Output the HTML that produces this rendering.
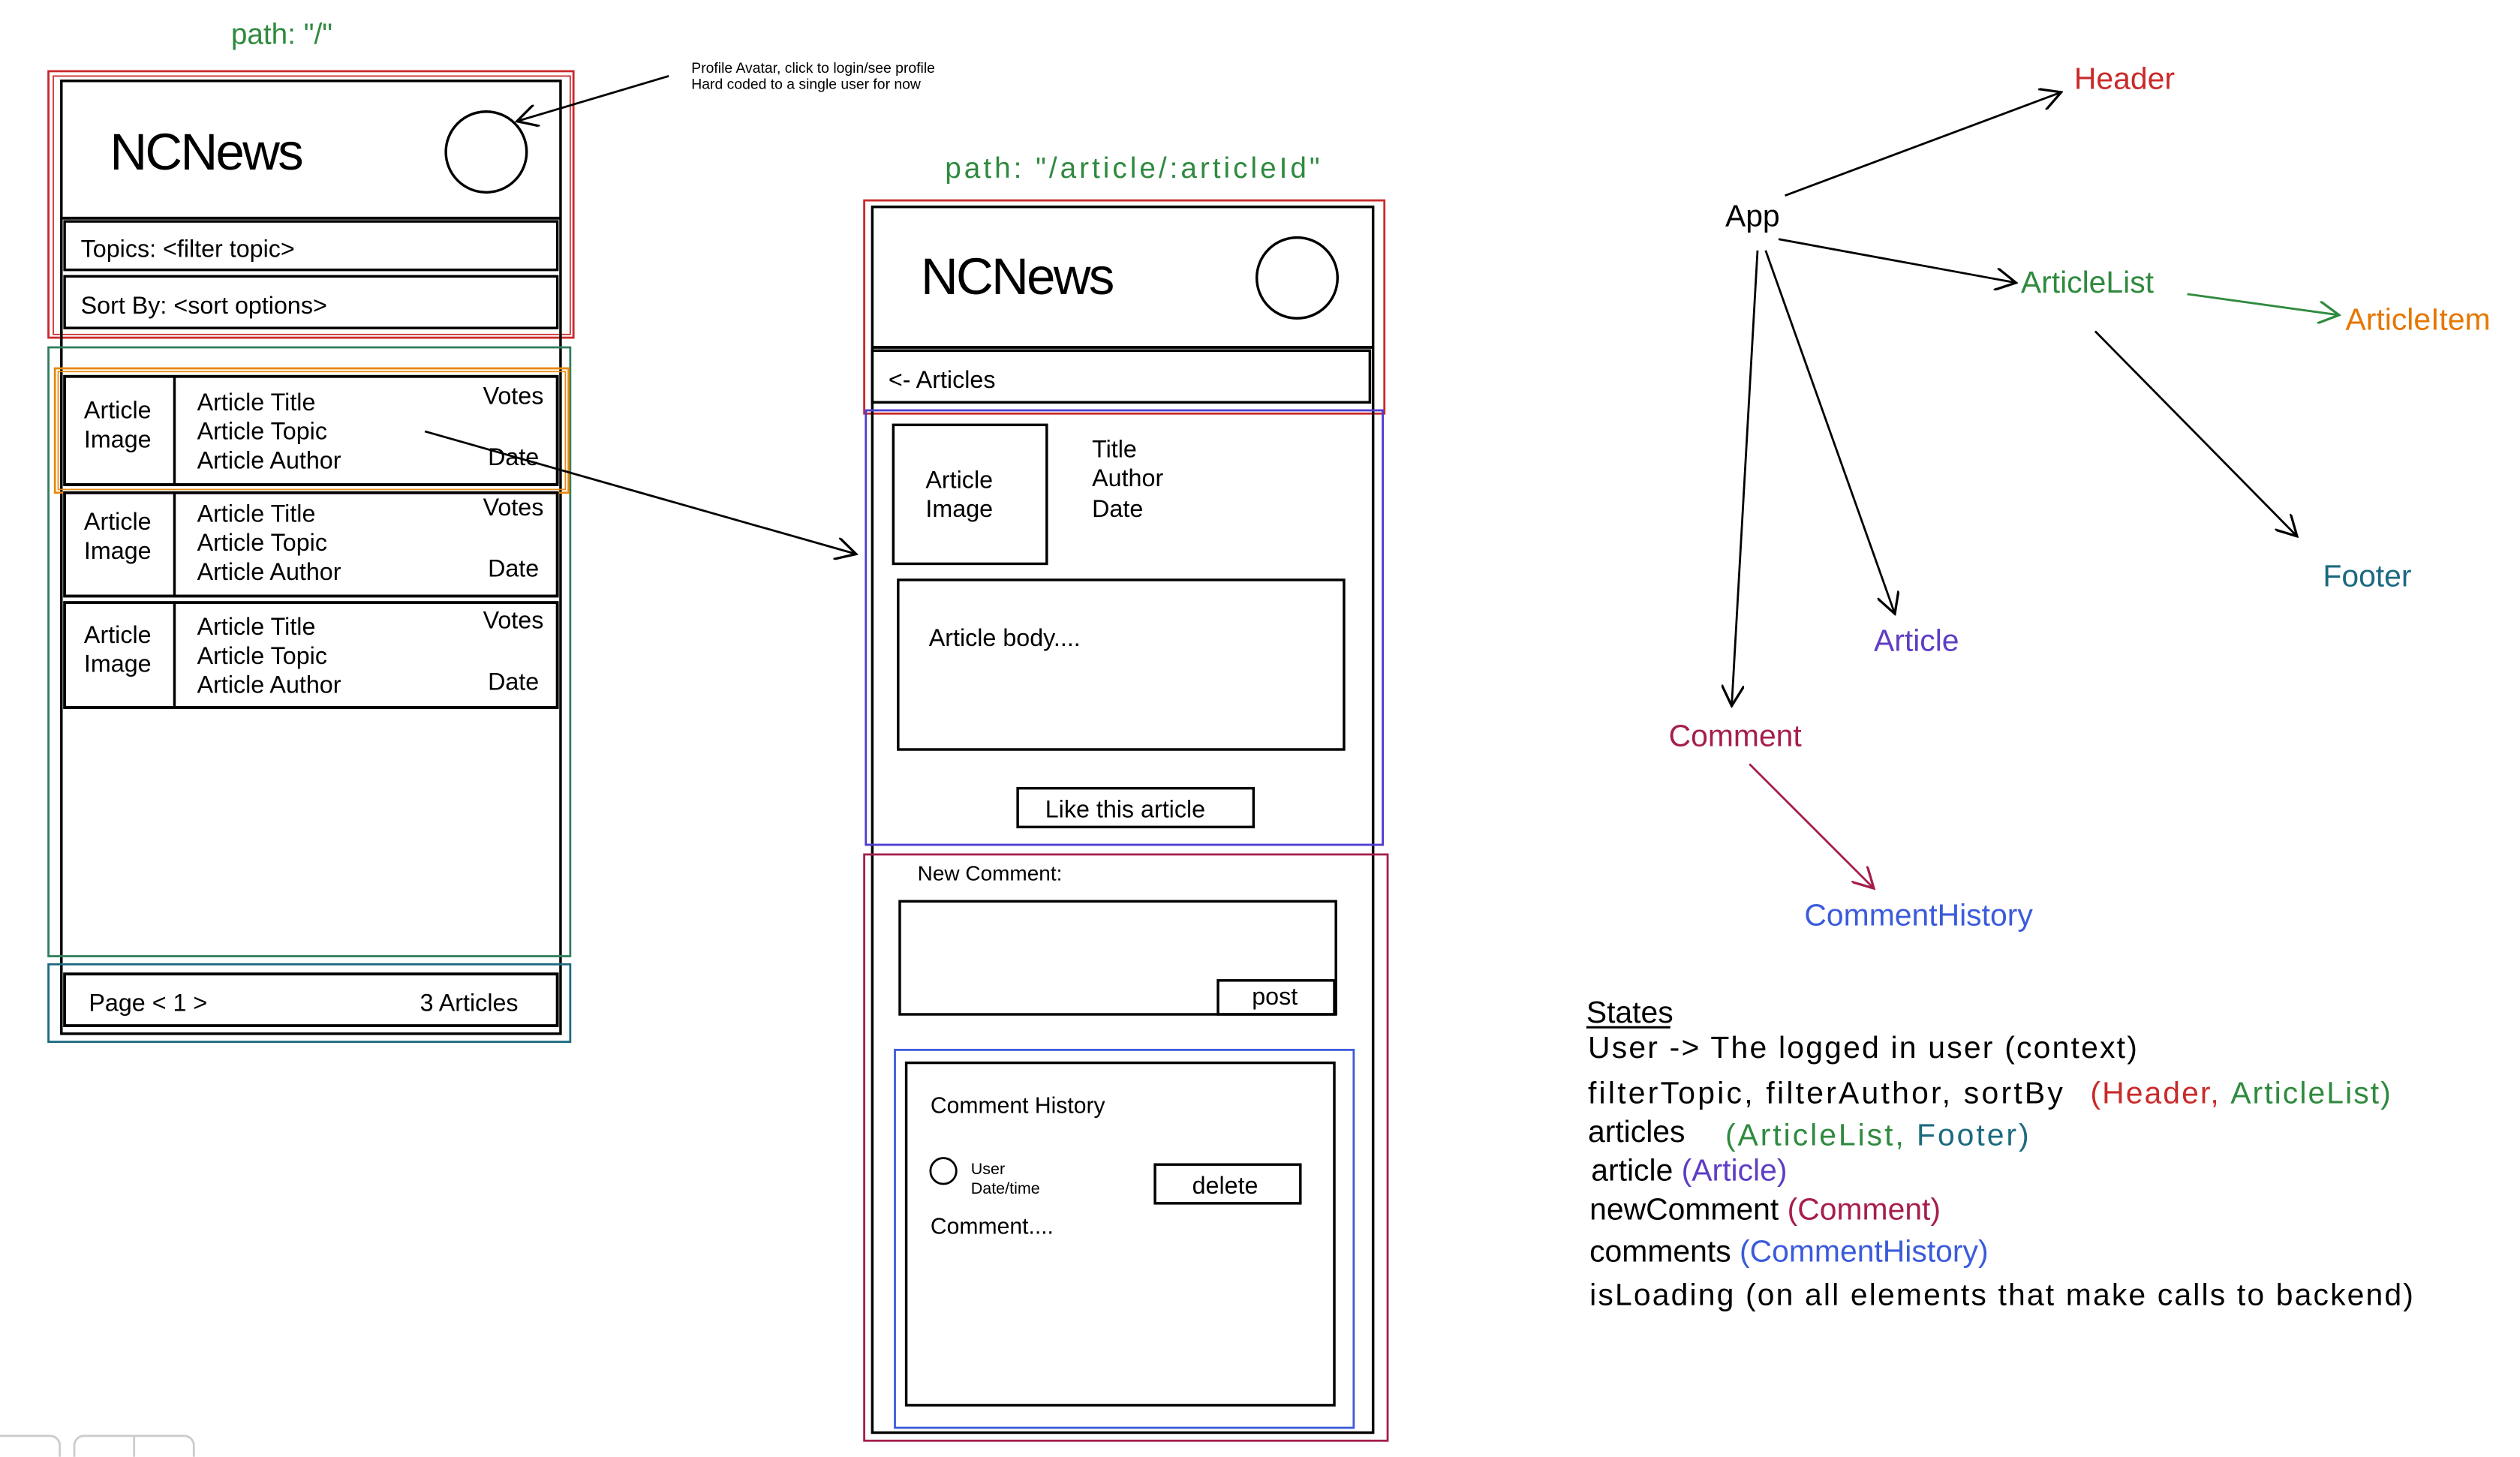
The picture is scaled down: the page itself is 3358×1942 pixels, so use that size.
<!DOCTYPE html>
<html><head><meta charset="utf-8"><style>
html,body{margin:0;padding:0;background:#fff;width:3358px;height:1942px;overflow:hidden}
svg{display:block}
text{font-family:"Liberation Sans Narrow","Liberation Sans",sans-serif}
</style></head><body>
<svg width="3358" height="1942" viewBox="0 0 1560 902" xmlns="http://www.w3.org/2000/svg">
<defs>
<marker id="ah" viewBox="0 0 12 12" refX="11" refY="6" markerWidth="14" markerHeight="14" markerUnits="userSpaceOnUse" orient="auto"><path d="M0,0 L11,6 L0,12" fill="none" stroke="context-stroke" stroke-width="1.3"/></marker>
</defs>
<g fill="none" stroke-width="1.3">
<!-- left -->
<rect x="30" y="44" width="325" height="165" stroke="#c92a2a"/>
<rect x="33" y="47" width="320" height="160" stroke="#c92a2a" stroke-width="0.8"/>
<rect x="38" y="50" width="309" height="590" stroke="#000" stroke-width="1.6"/>
<line x1="38" y1="135" x2="347" y2="135" stroke="#000" stroke-width="1.8"/>
<circle cx="301" cy="94" r="25" stroke="#000" stroke-width="1.6"/>
<rect x="40" y="137" width="305" height="30" stroke="#000" stroke-width="1.6"/>
<rect x="40" y="171" width="305" height="32" stroke="#000" stroke-width="1.6"/>
<rect x="30" y="215" width="323" height="377" stroke="#2f7d5b"/>
<rect x="34" y="228" width="318" height="77" stroke="#e8890c"/>
<rect x="36" y="230" width="314" height="73" stroke="#e8890c" stroke-width="0.8"/>
<rect x="40" y="233" width="305" height="67" stroke="#000" stroke-width="1.8"/>
<line x1="108" y1="233" x2="108" y2="300" stroke="#000" stroke-width="1.6"/>
<rect x="40" y="305" width="305" height="64" stroke="#000" stroke-width="1.8"/>
<line x1="108" y1="305" x2="108" y2="369" stroke="#000" stroke-width="1.6"/>
<rect x="40" y="373" width="305" height="65" stroke="#000" stroke-width="1.8"/>
<line x1="108" y1="373" x2="108" y2="438" stroke="#000" stroke-width="1.6"/>
<rect x="30" y="597" width="323" height="48" stroke="#1c6a80"/>
<rect x="40" y="603" width="305" height="32" stroke="#000" stroke-width="1.8"/>
<line x1="414" y1="47" x2="320" y2="75" stroke="#000" marker-end="url(#ah)"/>
<line x1="263" y1="267" x2="530" y2="343" stroke="#000" marker-end="url(#ah)"/>
<!-- middle -->
<rect x="535" y="124" width="322" height="132" stroke="#c92a2a"/>
<rect x="540" y="128" width="310" height="759" stroke="#000" stroke-width="1.6"/>
<line x1="540" y1="215" x2="850" y2="215" stroke="#000" stroke-width="1.8"/>
<circle cx="803" cy="172" r="25" stroke="#000" stroke-width="1.6"/>
<rect x="540" y="217" width="308" height="32" stroke="#000" stroke-width="1.6"/>
<rect x="536" y="254" width="320" height="269" stroke="#4c3dd0"/>
<rect x="553" y="263" width="95" height="86" stroke="#000" stroke-width="1.6"/>
<rect x="556" y="359" width="276" height="105" stroke="#000" stroke-width="1.6"/>
<rect x="630" y="488" width="146" height="24" stroke="#000" stroke-width="1.6"/>
<rect x="535" y="529" width="324" height="363" stroke="#a61e4d"/>
<rect x="557" y="558" width="270" height="70" stroke="#000" stroke-width="1.6"/>
<rect x="754" y="607" width="72" height="21" stroke="#000" stroke-width="1.6"/>
<rect x="554" y="650" width="284" height="234" stroke="#3b5bdb"/>
<rect x="561" y="658" width="265" height="212" stroke="#000" stroke-width="1.6"/>
<circle cx="584" cy="725" r="8" stroke="#000"/>
<rect x="715" y="721" width="90" height="24" stroke="#000" stroke-width="1.6"/>
<!-- right arrows -->
<line x1="1105" y1="121" x2="1276" y2="57" stroke="#000" marker-end="url(#ah)"/>
<line x1="1101" y1="148" x2="1248" y2="175" stroke="#000" marker-end="url(#ah)"/>
<line x1="1354" y1="182" x2="1448" y2="195" stroke="#2f8a3e" marker-end="url(#ah)"/>
<line x1="1297" y1="205" x2="1422" y2="332" stroke="#000" marker-end="url(#ah)"/>
<line x1="1093" y1="155" x2="1173" y2="380" stroke="#000" marker-end="url(#ah)"/>
<line x1="1088" y1="155" x2="1072" y2="437" stroke="#000" marker-end="url(#ah)"/>
<line x1="1083" y1="473" x2="1160" y2="550" stroke="#a61e4d" marker-end="url(#ah)"/>
<line x1="982" y1="636" x2="1034" y2="636" stroke="#000" stroke-width="1.4"/>
<!-- bottom buttons -->
<path d="M0,889 H31 a6,6 0 0 1 6,6 V902" stroke="#ccc"/>
<path d="M46,902 V895 a6,6 0 0 1 6,-6 H114 a6,6 0 0 1 6,6 V902 M83,889 V902" stroke="#ccc"/>
</g>
<g fill="#000">
<text x="143" y="27" font-size="18" fill="#2f8a3e">path: "/"</text>
<text x="428" y="45" font-size="9">Profile Avatar, click to login/see profile</text>
<text x="428" y="55" font-size="9">Hard coded to a single user for now</text>
<text x="68" y="105" font-size="32" textLength="120">NCNews</text>
<text x="50" y="159" font-size="15">Topics: &lt;filter topic&gt;</text>
<text x="50" y="194" font-size="15">Sort By: &lt;sort options&gt;</text>
<g font-size="15">
<text x="52" y="259">Article</text><text x="52" y="277">Image</text>
<text x="122" y="254">Article Title</text><text x="122" y="272">Article Topic</text><text x="122" y="290">Article Author</text>
<text x="299" y="250">Votes</text><text x="302" y="288">Date</text>
<text x="52" y="328">Article</text><text x="52" y="346">Image</text>
<text x="122" y="323">Article Title</text><text x="122" y="341">Article Topic</text><text x="122" y="359">Article Author</text>
<text x="299" y="319">Votes</text><text x="302" y="357">Date</text>
<text x="52" y="398">Article</text><text x="52" y="416">Image</text>
<text x="122" y="393">Article Title</text><text x="122" y="411">Article Topic</text><text x="122" y="429">Article Author</text>
<text x="299" y="389">Votes</text><text x="302" y="427">Date</text>
<text x="55" y="626">Page &lt; 1 &gt;</text><text x="260" y="626">3 Articles</text>
</g>
<text x="585" y="110" font-size="18" fill="#2f8a3e" textLength="232">path: "/article/:articleId"</text>
<text x="570" y="182" font-size="32" textLength="120">NCNews</text>
<g font-size="15">
<text x="550" y="240">&lt;- Articles</text>
<text x="573" y="302">Article</text><text x="573" y="320">Image</text>
<text x="676" y="283">Title</text><text x="676" y="301">Author</text><text x="676" y="320">Date</text>
<text x="575" y="400">Article body....</text>
<text x="647" y="506">Like this article</text>
<text x="775" y="622">post</text>
<text x="738" y="739">delete</text>
</g>
<text x="568" y="545" font-size="13">New Comment:</text>
<text x="576" y="689" font-size="14">Comment History</text>
<text x="601" y="727" font-size="10">User</text>
<text x="601" y="739" font-size="10">Date/time</text>
<text x="576" y="764" font-size="14">Comment....</text>
<g font-size="19">
<text x="1068" y="140">App</text>
<text x="1284" y="55" fill="#c92a2a">Header</text>
<text x="1251" y="181" fill="#2f8a3e">ArticleList</text>
<text x="1452" y="204" fill="#e67700">ArticleItem</text>
<text x="1438" y="363" fill="#1c6a80">Footer</text>
<text x="1160" y="403" fill="#5f3dc4">Article</text>
<text x="1033" y="462" fill="#a61e4d">Comment</text>
<text x="1117" y="573" fill="#3b5bdb">CommentHistory</text>
<text x="982" y="633">States</text>
<text x="983" y="655" textLength="340">User -&gt; The logged in user (context)</text>
<text x="983" y="683" textLength="294">filterTopic, filterAuthor, sortBy</text>
<text x="1294" y="683" textLength="186"><tspan fill="#c92a2a">(Header, </tspan><tspan fill="#2f8a3e">ArticleList)</tspan></text>
<text x="983" y="707">articles</text>
<text x="1068" y="709" textLength="188"><tspan fill="#2f8a3e">(ArticleList, </tspan><tspan fill="#1c6a80">Footer)</tspan></text>
<text x="985" y="731">article <tspan fill="#5f3dc4">(Article)</tspan></text>
<text x="984" y="755">newComment <tspan fill="#a61e4d">(Comment)</tspan></text>
<text x="984" y="781">comments <tspan fill="#3b5bdb">(CommentHistory)</tspan></text>
<text x="984" y="808" textLength="510">isLoading (on all elements that make calls to backend)</text>
</g>
</g>
</svg>
</body></html>
